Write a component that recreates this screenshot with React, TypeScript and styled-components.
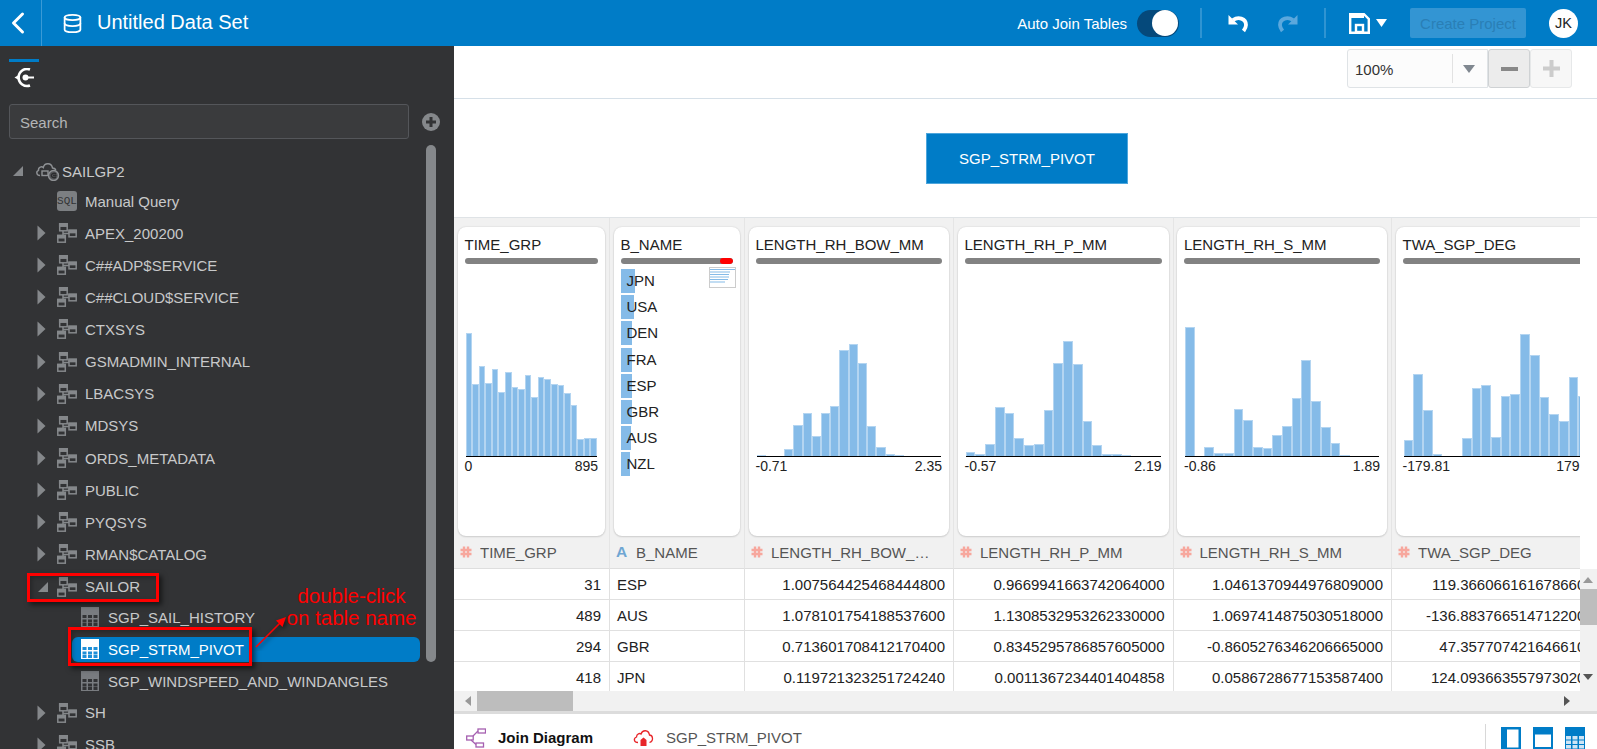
import React from "react";
import styled, { createGlobalStyle } from "styled-components";
import { ChevronLeft, Database } from "lucide-react";

const COLS = "156px 135px 209px 219.5px 218.5px 219px";

const GlobalStyle = createGlobalStyle`
  html, body { margin: 0; padding: 0; background: #fff; }
  body { font-family: "Liberation Sans", Arial, sans-serif; font-size: 15px; overflow: hidden; }
  * { box-sizing: border-box; }
`;

const Page = styled.div`
  width: 1597px;
  height: 749px;
  display: flex;
  flex-direction: column;
  overflow: hidden;
`;

/* top bar */
const TopBar = styled.header`
  height: 46px;
  flex: none;
  background: #007cc7;
  color: #fff;
  display: flex;
  align-items: center;
`;

const BackButton = styled.div`
  width: 42px;
  height: 46px;
  border-right: 1px solid #3a9ad6;
  display: flex;
  align-items: center;
`;

const DataSetIcon = styled.div`
  margin-left: 20px;
  display: flex;
`;

const Title = styled.h1`
  margin: 0 0 2px 14px;
  font-size: 20px;
  font-weight: 400;
  flex: 1;
`;

const AutoJoin = styled.span`
  font-size: 15px;
  margin-right: 10px;
`;

const Toggle = styled.div`
  width: 42px;
  height: 27px;
  border-radius: 14px;
  background: #05497b;
  display: flex;
  align-items: center;
  justify-content: flex-end;
  padding-right: 1px;
`;

const Knob = styled.div`
  width: 26px;
  height: 26px;
  border-radius: 50%;
  background: #fff;
`;

const BarDivider = styled.div<{ $before: number; $after: number }>`
  width: 2px;
  height: 30px;
  background: #2f94d2;
  margin: 0 ${(p) => p.$after}px 0 ${(p) => p.$before}px;
`;

const ToolIcon = styled.svg<{ $gap?: number }>`
  display: block;
  margin-right: ${(p) => p.$gap ?? 0}px;
`;

const CreateButton = styled.div`
  width: 116px;
  height: 30px;
  margin: 0 23px;
  border-radius: 2px;
  background: #3395d3;
  color: #2a7fb6;
  font-size: 15px;
  display: flex;
  align-items: center;
  justify-content: center;
`;

const Avatar = styled.div`
  width: 29px;
  height: 29px;
  margin-right: 19px;
  border-radius: 50%;
  background: #fff;
  color: #222;
  font-size: 14.5px;
  display: flex;
  align-items: center;
  justify-content: center;
`;

const Body = styled.div`
  flex: 1;
  min-height: 0;
  display: flex;
`;

/* left panel */
const Side = styled.aside`
  width: 454px;
  flex: none;
  background: #323335;
  position: relative;
  overflow: hidden;
  color: #c8c9ca;
`;

const SideTab = styled.div`
  margin: 13px 0 0 9px;
  width: 30px;
  height: 31px;
  border-top: 3px solid #007cc7;
  padding: 6px 0 0 5px;
`;

const SearchRow = styled.div`
  display: flex;
  align-items: center;
  margin: 14px 0 0 9px;
`;

const SearchBox = styled.input`
  width: 400px;
  height: 35px;
  background: #3a3b3d;
  border: 1px solid #54565a;
  border-radius: 3px;
  padding: 2px 10px 0;
  font: 15px "Liberation Sans", Arial, sans-serif;
  color: #ccc;
  outline: none;
  &::placeholder { color: #b4b5b6; opacity: 1; }
`;

const AddIcon = styled.svg`
  margin-left: 13px;
  display: block;
`;

const Tree = styled.div`
  margin-top: 17px;
`;

const TreeRow = styled.div<{ $indent: number; $height: number }>`
  height: ${(p) => p.$height}px;
  padding-left: ${(p) => p.$indent}px;
  display: flex;
  align-items: center;
  white-space: nowrap;
`;

const Twisty = styled.div<{ $width: number }>`
  width: ${(p) => p.$width}px;
  flex: none;
  display: flex;
  align-items: center;
`;

const NodeIcon = styled.svg<{ $gap: number }>`
  flex: none;
  display: block;
  margin-right: ${(p) => p.$gap}px;
`;

const SqlBadge = styled.div`
  width: 20px;
  height: 20px;
  flex: none;
  margin-right: 8px;
  border-radius: 3px;
  background: #7c7f82;
  color: #323335;
  font: 11px "Liberation Mono", monospace;
  display: flex;
  align-items: center;
  justify-content: center;
`;

const ChildGroup = styled.div`
  display: flex;
  flex-direction: column;
  gap: 7px;
  padding: 2px 0 3px;
`;

const TableRow = styled.div<{ $selected?: boolean }>`
  width: 348px;
  height: 25px;
  margin-left: 72px;
  padding-left: 9px;
  border-radius: 6px;
  display: flex;
  align-items: center;
  white-space: nowrap;
  background: ${(p) => (p.$selected ? "#007cc7" : "transparent")};
  color: ${(p) => (p.$selected ? "#fff" : "#c8c9ca")};
`;

const SideScroll = styled.div`
  position: absolute;
  left: 426px;
  top: 99px;
  width: 10px;
  height: 517px;
  border-radius: 5px;
  background: #85888b;
`;

const MarkBox = styled.div<{ $x: number; $y: number; $w: number; $h: number }>`
  position: absolute;
  left: ${(p) => p.$x}px;
  top: ${(p) => p.$y}px;
  width: ${(p) => p.$w}px;
  height: ${(p) => p.$h}px;
  border: 3px solid #f00;
  box-shadow: 3px 3px 5px rgba(0, 0, 0, 0.55), inset 2px 2px 4px rgba(0, 0, 0, 0.25);
`;

const MarkText = styled.div`
  position: absolute;
  left: 279px;
  top: 539px;
  width: 145px;
  text-align: center;
  color: #f00;
  font-size: 20.5px;
  line-height: 22px;
`;

const MarkArrow = styled.svg`
  position: absolute;
  left: 250px;
  top: 565px;
`;

/* main panel */
const Main = styled.main`
  flex: 1;
  min-width: 0;
  display: flex;
  flex-direction: column;
`;

const ZoomBar = styled.div`
  height: 53px;
  flex: none;
  border-bottom: 1px solid #d6e0e8;
  padding: 3px 25px 0 0;
  display: flex;
  justify-content: flex-end;
  align-items: flex-start;
`;

const ZoomSelect = styled.div`
  width: 141px;
  height: 39px;
  background: #fcfcfc;
  border: 1px solid #dfe3e6;
  border-radius: 3px 0 0 3px;
  display: flex;
  align-items: center;
  padding-left: 7px;
  color: #333;
  font-size: 15px;
`;

const ZoomValue = styled.span`
  width: 97px;
  padding-top: 2px;
`;

const ZoomCaret = styled.div`
  height: 29px;
  flex: 1;
  border-left: 1px solid #e2e2e2;
  display: flex;
  align-items: center;
  padding-left: 10px;
`;

const ZoomButton = styled.div<{ $active?: boolean }>`
  width: 42px;
  height: 39px;
  border: 1px solid ${(p) => (p.$active ? "#cfd2d4" : "#e6e8e9")};
  border-radius: 3px;
  background: ${(p) => (p.$active ? "#ececec" : "#f7f7f7")};
  display: flex;
  align-items: center;
  justify-content: center;
`;

const Diagram = styled.div`
  height: 119px;
  flex: none;
  border-bottom: 1px solid #dfe3e6;
  padding-left: 472px;
  display: flex;
  align-items: center;
`;

const TableNode = styled.div`
  width: 202px;
  height: 51px;
  background: #007cc7;
  border: 1px solid #4ea6dc;
  color: #fff;
  font-size: 15px;
  display: flex;
  align-items: center;
  justify-content: center;
`;

const DataArea = styled.div`
  height: 473px;
  flex: none;
  display: flex;
`;

const Viewport = styled.div`
  width: 1125.5px;
  flex: none;
  overflow: hidden;
`;

const Columns = styled.div`
  display: grid;
  grid-template-columns: ${COLS};
  width: 1157px;
`;

const ProfileCell = styled.div`
  height: 318px;
  background: #f1f1f1;
  border-right: 1px solid #e5e5e5;
  padding: 9px 4px 0 3.5px;
`;

const Card = styled.div`
  height: 309px;
  background: #fff;
  border-radius: 8px;
  box-shadow: 0 0 2px rgba(0, 0, 0, 0.14), 0 1px 2px rgba(0, 0, 0, 0.12);
  padding: 9px 7px 0;
  position: relative;
  color: #222;
`;

const CardTitle = styled.div`
  height: 18px;
  line-height: 18px;
  font-size: 15px;
  white-space: nowrap;
  margin-bottom: 4px;
`;

const Meter = styled.div`
  height: 6px;
  border-radius: 3px;
  background: #828282;
  overflow: hidden;
  display: flex;
  justify-content: flex-end;
`;

const MeterAlert = styled.div`
  width: 13px;
  background: #f00;
  border-radius: 3px;
`;

const Plot = styled.div`
  height: 193px;
  margin: 0 1px;
  display: flex;
  align-items: flex-end;
  border-bottom: 1px solid #000;
`;

const PlotBar = styled.div`
  flex: 1;
  min-width: 0;
  background: #85bbe8;
  border: 1px solid #b4d5f1;
  border-bottom: none;
`;

const AxisRow = styled.div`
  display: flex;
  justify-content: space-between;
  font-size: 14px;
  line-height: 18px;
`;

const CatList = styled.div`
  margin-top: 5px;
`;

const CatRow = styled.div`
  height: 26.2px;
  position: relative;
  padding-left: 6px;
  line-height: 24px;
  font-size: 15px;
`;

const CatFill = styled.div`
  position: absolute;
  left: 0;
  top: 0;
  height: 24px;
  background: #85bbe8;
`;

const CatLabel = styled.span`
  position: relative;
`;

const MiniChart = styled.svg`
  position: absolute;
  right: 4px;
  top: 40px;
`;

const HeadCell = styled.div`
  height: 33px;
  background: #f1f1f1;
  border-right: 1px solid #e5e5e5;
  border-bottom: 1px solid #dedede;
  padding: 0 20px 0 6px;
  display: flex;
  align-items: center;
  gap: 8px;
  color: #555;
  font-size: 15px;
`;

const HeadName = styled.span`
  overflow: hidden;
  white-space: nowrap;
  text-overflow: ellipsis;
`;

const TypeA = styled.span`
  width: 12px;
  flex: none;
  color: #6fa6d3;
  font-weight: 700;
  font-size: 15.5px;
`;

const Cell = styled.div<{ $left?: boolean }>`
  height: 31px;
  border-right: 1px solid #e0e0e0;
  border-bottom: 1px solid #e0e0e0;
  padding: 0 8px;
  padding-left: ${(p) => (p.$left ? "7px" : "0")};
  display: flex;
  align-items: center;
  justify-content: ${(p) => (p.$left ? "flex-start" : "flex-end")};
  white-space: nowrap;
  color: #222;
  font-size: 15px;
`;

const VGutter = styled.div`
  flex: 1;
  padding-top: 351px;
`;

const VScroll = styled.div`
  height: 122px;
  background: #f1f1f1;
  display: flex;
  flex-direction: column;
  align-items: center;
  padding-top: 8px;
`;

const VThumb = styled.div`
  width: 100%;
  height: 36px;
  margin: 6px 0 49px;
  background: #bdbdbd;
`;

const HScroll = styled.div`
  height: 23px;
  flex: none;
  background: #f1f1f1;
  border-bottom: 3px solid #dcdcdc;
  display: flex;
  align-items: center;
  padding: 0 27px 0 11px;
`;

const HThumb = styled.div`
  width: 96px;
  height: 20px;
  margin: 0 auto 0 6px;
  background: #bdbdbd;
`;

const Footer = styled.footer`
  flex: 1;
  display: flex;
  align-items: center;
  padding: 11px 12px 0;
  color: #555;
  font-size: 15px;
`;

const FooterTab = styled.span<{ $active?: boolean; $width: number }>`
  width: ${(p) => p.$width}px;
  font-weight: ${(p) => (p.$active ? 700 : 400)};
  color: ${(p) => (p.$active ? "#111" : "#555")};
`;

const FooterIcon = styled.svg<{ $gap?: number }>`
  flex: none;
  display: block;
  margin-right: ${(p) => p.$gap ?? 12}px;
`;

const FooterRight = styled.div`
  margin-left: auto;
  height: 26px;
  margin-top: -1px;
  border-left: 1px solid #d8d8d8;
  padding: 3px 0 0 15px;
  display: flex;
`;

/* drawn icons */
const Tri = ({ dir, color = "#85888b" }: { dir: "right" | "open" | "left" | "small" | "up" | "down"; color?: string }) => {
  if (dir === "open")
    return (
      <svg width="12" height="12" viewBox="0 0 12 12">
        <path d="M11 1V11H1Z" fill={color} />
      </svg>
    );
  if (dir === "right")
    return (
      <svg width="9" height="16" viewBox="0 0 9 16">
        <path d="M0.5 0.5L8.5 8L0.5 15.5Z" fill={color} />
      </svg>
    );
  if (dir === "small")
    return (
      <svg width="6" height="10" viewBox="0 0 6 10">
        <path d="M0 0V10L6 5Z" fill={color} />
      </svg>
    );
  if (dir === "left")
    return (
      <svg width="6" height="10" viewBox="0 0 6 10">
        <path d="M6 0V10L0 5Z" fill={color} />
      </svg>
    );
  if (dir === "up")
    return (
      <svg width="10" height="6" viewBox="0 0 10 6">
        <path d="M0 6H10L5 0Z" fill={color} />
      </svg>
    );
  return (
    <svg width="10" height="6" viewBox="0 0 10 6">
      <path d="M0 0H10L5 6Z" fill={color} />
    </svg>
  );
};

const SchemaIcon = () => (
  <NodeIcon $gap={8} width="20" height="20" viewBox="0 0 20 20" fill="none" stroke="#85888b" strokeWidth="1.5">
    <rect x="2.7" y="0.8" width="7.5" height="7" />
    <rect x="2.7" y="0.8" width="7.5" height="2.4" fill="#85888b" />
    <rect x="12" y="7.3" width="7.2" height="6.5" />
    <rect x="12" y="7.3" width="7.2" height="2.3" fill="#85888b" />
    <rect x="0.8" y="12.5" width="7.5" height="6.7" />
    <rect x="0.8" y="12.5" width="7.5" height="2.3" fill="#85888b" />
    <path d="M6 8V12.5M6 10.5H12" />
  </NodeIcon>
);

const TableIcon = ({ selected }: { selected?: boolean }) => {
  const frame = selected ? "#fff" : "#797c80";
  const cell = selected ? "#1e90d8" : "#323335";
  return (
    <NodeIcon $gap={9} width="18" height="20" viewBox="0 0 18 20">
      <rect width="18" height="20" fill={frame} />
      {[8, 12.5, 16].map((y) =>
        [1.5, 7, 12.5].map((x) => <rect key={`${x}-${y}`} x={x} y={y} width="4" height="3" fill={cell} />)
      )}
    </NodeIcon>
  );
};

const CloudIcon = () => (
  <NodeIcon $gap={2} width="25" height="20" viewBox="0 0 25 20" fill="none" stroke="#8f9295" strokeWidth="1.4">
    <path d="M5 14.5C1.5 14.5 0.7 10.5 3.5 9.3C3 5.8 7 5 8.3 6.5C9.5 1.5 16.5 1.5 17.5 7C19 7 20.5 8 20.8 9.5" />
    <rect x="7" y="10" width="6" height="4.5" />
    <circle cx="18.5" cy="14.5" r="5" fill="#55575a" />
    <path d="M21 12.8C18.5 11.5 16.3 13 16.3 14.5C16.3 16 18.5 17.5 21 16.2M18 14.5H21.5" stroke="#2b2c2e" />
  </NodeIcon>
);

const ConnectIcon = () => (
  <svg width="22" height="20" viewBox="0 0 22 20" fill="none" stroke="#fff" strokeWidth="2.6" style={{ display: "block" }}>
    <path d="M16 1.5A8.5 8.5 0 1 0 16 17.5" />
    <path d="M0.5 9.5L5.5 6.5V12.5Z" fill="#fff" stroke="none" />
    <circle cx="11.5" cy="9.5" r="3" fill="#fff" stroke="none" />
    <path d="M11.5 9.5H20" strokeWidth="2" />
  </svg>
);

const Hash = () => (
  <svg width="12" height="12" viewBox="0 0 12 12" stroke="#f7a79d" strokeWidth="2.4" style={{ flex: "none" }}>
    <path d="M4 0.5V11.5M8 0.5V11.5M0.5 4H11.5M0.5 8H11.5" />
  </svg>
);

type Col = {
  name: string;
  kind: "num" | "text";
  min?: string;
  max?: string;
  bars?: number[];
  values: string[];
};

const columns: Col[] = [
  {
    name: "TIME_GRP",
    kind: "num",
    min: "0",
    max: "895",
    bars: [123, 72, 90, 73, 87, 64, 84, 69, 67, 81, 59, 79, 77, 72, 71, 63, 51, 17, 18, 18],
    values: ["31", "489", "294", "418"],
  },
  {
    name: "B_NAME",
    kind: "text",
    values: ["ESP", "AUS", "GBR", "JPN"],
  },
  {
    name: "LENGTH_RH_BOW_MM",
    kind: "num",
    min: "-0.71",
    max: "2.35",
    bars: [1, 0, 0, 7, 31, 43, 20, 43, 50, 106, 112, 93, 30, 9, 2, 1, 0, 0, 0, 0],
    values: ["1.007564425468444800", "1.078101754188537600", "0.713601708412170400", "0.119721323251724240"],
  },
  {
    name: "LENGTH_RH_P_MM",
    kind: "num",
    min: "-0.57",
    max: "2.19",
    bars: [4, 2, 12, 49, 43, 18, 11, 12, 46, 93, 115, 92, 35, 11, 2, 2, 1, 0, 0, 0],
    values: ["0.9669941663742064000", "1.1308532953262330000", "0.8345295786857605000", "0.0011367234401404858"],
  },
  {
    name: "LENGTH_RH_S_MM",
    kind: "num",
    min: "-0.86",
    max: "1.89",
    bars: [129, 0, 9, 3, 3, 47, 36, 9, 8, 21, 30, 58, 96, 55, 29, 13, 1, 0, 0, 0],
    values: ["1.0461370944976809000", "1.0697414875030518000", "-0.8605276346206665000", "0.0586728677153587400"],
  },
  {
    name: "TWA_SGP_DEG",
    kind: "num",
    min: "-179.81",
    max: "179.81",
    bars: [16, 82, 46, 2, 0, 0, 18, 68, 71, 19, 60, 62, 122, 101, 59, 42, 35, 79, 60, 30],
    values: ["119.36606616167866000", "-136.88376651471220000", "47.35770742164661000", "124.09366355797302000"],
  },
];

const categories: [string, number][] = [
  ["JPN", 14],
  ["USA", 13],
  ["DEN", 11],
  ["FRA", 11],
  ["ESP", 11],
  ["GBR", 11],
  ["AUS", 10],
  ["NZL", 9],
];

const schemasTop = ["APEX_200200", "C##ADP$SERVICE", "C##CLOUD$SERVICE", "CTXSYS", "GSMADMIN_INTERNAL", "LBACSYS", "MDSYS", "ORDS_METADATA", "PUBLIC", "PYQSYS", "RMAN$CATALOG"];

const Schema = ({ name, open }: { name: string; open?: boolean }) => (
  <TreeRow $indent={37} $height={32.15}>
    <Twisty $width={20}>{open ? <Tri dir="open" /> : <Tri dir="right" />}</Twisty>
    <SchemaIcon />
    {name}
  </TreeRow>
);

export default function App() {
  return (
    <Page>
      <GlobalStyle />
      <TopBar>
        <BackButton>
          <ChevronLeft size={36} strokeWidth={2} color="#fff" />
        </BackButton>
        <DataSetIcon>
          <Database size={21} strokeWidth={2} color="#fff" />
        </DataSetIcon>
        <Title>Untitled Data Set</Title>
        <AutoJoin>Auto Join Tables</AutoJoin>
        <Toggle>
          <Knob />
        </Toggle>
        <BarDivider $before={21} $after={26} />
        <ToolIcon $gap={30} width="20" height="20" viewBox="0 0 20 20" fill="none">
          <path d="M0.5 2V11.5H10Z" fill="#fff" />
          <path d="M5 7C10 3.5 18 5 18 12C18 14.5 17 16 15.5 18" stroke="#fff" strokeWidth="3.8" />
        </ToolIcon>
        <ToolIcon width="20" height="20" viewBox="0 0 20 20" fill="none">
          <path d="M19.5 2V11.5H10Z" fill="#5ba8dd" />
          <path d="M15 7C10 3.5 2 5 2 12C2 14.5 3 16 4.5 18" stroke="#5ba8dd" strokeWidth="3.8" />
        </ToolIcon>
        <BarDivider $before={26} $after={23} />
        <ToolIcon $gap={6} width="21" height="21" viewBox="0 0 21 21" fill="none">
          <path d="M1.2 1.2H15L19.8 6V19.8H1.2Z" stroke="#fff" strokeWidth="2.4" />
          <rect x="7" y="12" width="7" height="7" stroke="#fff" strokeWidth="2.4" fill="#007cc7" />
          <rect x="2" y="2" width="13" height="3" fill="#fff" />
        </ToolIcon>
        <ToolIcon width="11" height="8" viewBox="0 0 11 8">
          <path d="M0 0H11L5.5 8Z" fill="#fff" />
        </ToolIcon>
        <CreateButton>Create Project</CreateButton>
        <Avatar>JK</Avatar>
      </TopBar>
      <Body>
        <Side>
          <SideTab>
            <ConnectIcon />
          </SideTab>
          <SearchRow>
            <SearchBox placeholder="Search" />
            <AddIcon width="18" height="18" viewBox="0 0 18 18">
              <circle cx="9" cy="9" r="9" fill="#85888b" />
              <path d="M9 4V14M4 9H14" stroke="#323335" strokeWidth="3" />
            </AddIcon>
          </SearchRow>
          <Tree>
            <TreeRow $indent={12} $height={30}>
              <Twisty $width={23}>
                <Tri dir="open" />
              </Twisty>
              <CloudIcon />
              SAILGP2
            </TreeRow>
            <TreeRow $indent={57} $height={30}>
              <SqlBadge>SQL</SqlBadge>
              Manual Query
            </TreeRow>
            <div style={{ height: 1 }} />
            {schemasTop.map((s) => (
              <Schema key={s} name={s} />
            ))}
            <Schema name="SAILOR" open />
            <ChildGroup>
              <TableRow>
                <TableIcon />
                SGP_SAIL_HISTORY
              </TableRow>
              <TableRow $selected>
                <TableIcon selected />
                SGP_STRM_PIVOT
              </TableRow>
              <TableRow>
                <TableIcon />
                SGP_WINDSPEED_AND_WINDANGLES
              </TableRow>
            </ChildGroup>
            <Schema name="SH" />
            <Schema name="SSB" />
          </Tree>
          <SideScroll />
          <MarkBox $x={27} $y={527} $w={132} $h={29} />
          <MarkBox $x={68} $y={581} $w={184} $h={39} />
          <MarkText>
            double-click
            <br />
            on table name
          </MarkText>
          <MarkArrow width="40" height="40" viewBox="0 0 40 40" fill="none">
            <g style={{ filter: "drop-shadow(2px 2px 2px rgba(0,0,0,0.5))" }}>
              <path d="M6 36L31 11" stroke="#f00" strokeWidth="1.6" />
              <path d="M36 6L32.5 16L26 9.5Z" fill="#f00" />
            </g>
          </MarkArrow>
        </Side>
        <Main>
          <ZoomBar>
            <ZoomSelect>
              <ZoomValue>100%</ZoomValue>
              <ZoomCaret>
                <svg width="12" height="8" viewBox="0 0 12 8">
                  <path d="M0 0H12L6 8Z" fill="#808890" />
                </svg>
              </ZoomCaret>
            </ZoomSelect>
            <ZoomButton $active>
              <svg width="17" height="4" viewBox="0 0 17 4">
                <rect width="17" height="4" fill="#888" />
              </svg>
            </ZoomButton>
            <ZoomButton>
              <svg width="17" height="17" viewBox="0 0 17 17">
                <path d="M8.5 0V17M0 8.5H17" stroke="#ccc" strokeWidth="4" />
              </svg>
            </ZoomButton>
          </ZoomBar>
          <Diagram>
            <TableNode>SGP_STRM_PIVOT</TableNode>
          </Diagram>
          <DataArea>
            <Viewport>
              <Columns>
                {columns.map((c) => (
                  <ProfileCell key={c.name}>
                    <Card>
                      <CardTitle>{c.name}</CardTitle>
                      <Meter>{c.kind === "text" && <MeterAlert />}</Meter>
                      {c.bars ? (
                        <>
                          <Plot>
                            {c.bars.map((h, i) => (
                              <PlotBar key={i} style={{ height: h, visibility: h ? "visible" : "hidden" }} />
                            ))}
                          </Plot>
                          <AxisRow>
                            <span>{c.min}</span>
                            <span>{c.max}</span>
                          </AxisRow>
                        </>
                      ) : (
                        <>
                          <CatList>
                            {categories.map(([label, w]) => (
                              <CatRow key={label}>
                                <CatFill style={{ width: w }} />
                                <CatLabel>{label}</CatLabel>
                              </CatRow>
                            ))}
                          </CatList>
                          <MiniChart width="27" height="21" viewBox="0 0 27 21">
                            <rect x="0.5" y="0.5" width="26" height="20" fill="#fff" stroke="#ccc" />
                            <path d="M1 2.5H26M1 5H21M1 7.5H20M1 10H20M1 12.5H19M1 15H16" stroke="#85bbe8" strokeWidth="1.2" />
                          </MiniChart>
                        </>
                      )}
                    </Card>
                  </ProfileCell>
                ))}
                {columns.map((c) => (
                  <HeadCell key={c.name}>
                    {c.kind === "num" ? <Hash /> : <TypeA>A</TypeA>}
                    <HeadName>{c.name}</HeadName>
                  </HeadCell>
                ))}
                {[0, 1, 2, 3].flatMap((r) =>
                  columns.map((c) => (
                    <Cell key={`${c.name}-${r}`} $left={c.kind === "text"}>
                      {c.values[r]}
                    </Cell>
                  ))
                )}
              </Columns>
            </Viewport>
            <VGutter>
              <VScroll>
                <Tri dir="up" color="#999" />
                <VThumb />
                <Tri dir="down" color="#555" />
              </VScroll>
            </VGutter>
          </DataArea>
          <HScroll>
            <Tri dir="left" color="#999" />
            <HThumb />
            <Tri dir="small" color="#555" />
          </HScroll>
          <Footer>
            <FooterIcon width="20" height="20" viewBox="0 0 20 20" fill="none" stroke="#a55fb0" strokeWidth="1.3">
              <rect x="12" y="1" width="7.5" height="4" />
              <rect x="0.7" y="8" width="6.5" height="4" />
              <rect x="10" y="15" width="7.5" height="4" />
              <path d="M12 3L7 8M5 12L10 16.5" />
            </FooterIcon>
            <FooterTab $active $width={135}>
              Join Diagram
            </FooterTab>
            <FooterIcon width="21" height="18" viewBox="0 0 21 18" fill="none" stroke="#e8262a" strokeWidth="1.3">
              <path d="M5 13.5C1 13.5 0 9.5 3.5 8C3.5 4.5 7 4 8 5C9.5 0.5 15.5 0.5 16.5 6C20 6 21 12 16.5 13.5" />
              <path d="M7.5 11L10.5 8.5L13.5 11V17H7.5Z" fill="#e8262a" stroke="none" />
            </FooterIcon>
            <FooterTab $width={150}>SGP_STRM_PIVOT</FooterTab>
            <FooterRight>
              <FooterIcon width="20" height="22" viewBox="0 0 20 22">
                <rect width="20" height="22" fill="#007cc7" />
                <rect x="6" y="2.5" width="11.5" height="18" fill="#fff" />
              </FooterIcon>
              <FooterIcon width="20" height="22" viewBox="0 0 20 22">
                <rect x="1" y="1" width="18" height="20" fill="#fff" stroke="#007cc7" strokeWidth="2" />
                <rect x="1" y="1" width="18" height="6.5" fill="#007cc7" />
              </FooterIcon>
              <FooterIcon $gap={0} width="20" height="22" viewBox="0 0 20 22">
                <rect width="20" height="22" fill="#007cc7" />
                {[9, 13.5, 18].map((y) =>
                  [1, 7.5, 14].map((x) => <rect key={`${x}-${y}`} x={x} y={y} width="5" height="3.5" fill="#cfe5f5" />)
                )}
              </FooterIcon>
            </FooterRight>
          </Footer>
        </Main>
      </Body>
    </Page>
  );
}
